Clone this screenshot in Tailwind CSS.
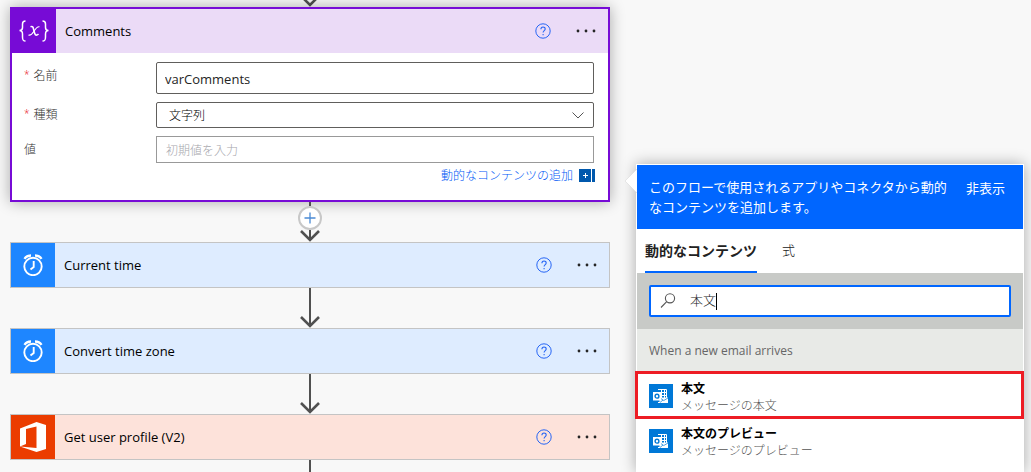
<!DOCTYPE html>
<html lang="ja">
<head>
<meta charset="utf-8">
<meta name="viewport" content="width=device-width, initial-scale=1">
<title>フロー</title>
<script src="https://cdn.jsdelivr.net/npm/@tailwindcss/browser@4"></script>
</head>
<body class="bg-[#f8f8f8] font-['Open_Sans','Noto_Sans_CJK_JP',sans-serif] text-[13px] text-black">
<svg class="hidden">
  <symbol id="arrow" viewBox="0 0 22 14"><path d="M2 3L11 12L20 3" fill="none" stroke="#505050" stroke-width="2.600"/></symbol>
  <symbol id="help" viewBox="0 0 16 16"><circle cx="8" cy="8" r="7.200" fill="none" stroke="#2766f5" stroke-width="1"/><path d="M5.900 6.300C5.900 3.200 10.200 3.300 10.200 6C10.200 7.600 8.100 7.700 8.100 9.600M8.100 11v1.200" fill="none" stroke="#2766f5" stroke-width="1.100"/></symbol>
  <symbol id="more" viewBox="0 0 20 4"><g fill="#252525"><circle cx="2" cy="2" r="1.400"/><circle cx="10" cy="2" r="1.400"/><circle cx="18" cy="2" r="1.400"/></g></symbol>
  <symbol id="clock" viewBox="0 0 20 22"><g fill="none" stroke="#fff"><circle cx="10" cy="12.500" r="8.700" stroke-width="1.900"/><path d="M10.700 7v6L7.500 15.500" stroke-width="1.900"/><path d="M1.500 4.800Q3.500 1.500 8 1.500M18.500 4.800Q16.500 1.500 12 1.500" stroke-width="2.400"/></g></symbol>
  <symbol id="mail" viewBox="0 0 24 24"><path d="M9 5.500h8.500v13H9M11 8.500h6.500M11 11.500h6.500M12.500 5.500v9M15.500 5.500v9" fill="none" stroke="#fff" stroke-width="1"/><path d="M10.500 13.500h8.500v5.500h-8.500z" fill="#fff"/><path d="M11 14l3.800 2.500L19 14M11 18.500l3-2.500" fill="none" stroke="#0078d7" stroke-width=".7"/><path d="M4 8h8v8.500H4z" fill="#fff"/><circle cx="8" cy="12.200" r="1.900" fill="none" stroke="#0078d7" stroke-width="1.400"/></symbol>
</svg>
<div class="grid min-h-screen grid-cols-[600fr_388fr] gap-[26px] overflow-hidden pr-[7px] pl-2.5">
  <main class="flex flex-col">
    <div class="flex h-[7px] flex-col items-center justify-end overflow-hidden"><svg class="h-3.5 w-[22px] shrink-0"><use href="#arrow"/></svg></div>
    <section class="h-[195px] border-2 border-[#770bd6] bg-white shadow-[0_0_14px_rgba(0,0,0,0.32)]">
      <header class="flex h-11 items-center bg-[#ebdbf7]">
        <span class="flex size-11 items-center justify-center bg-[#770bd6]">
          <svg class="h-6 w-8" viewBox="0 0 32 24" fill="none" stroke="#fff"><path d="M7.500 2C5 2 4.500 3 4.500 5v3.500Q4.500 11.500 1.500 11.500Q4.500 11.500 4.500 15v3C4.500 21 5 22 7.500 22M24.500 2C27 2 27.500 3 27.500 5v3.500Q27.500 11.500 30.500 11.500Q27.500 11.500 27.500 15v3C27.500 21 27 22 24.500 22" stroke-width="1.500"/><path d="M12.500 7.800C15 6.800 15.200 8.500 16 12C16.800 15.800 17.800 17.300 20.500 15" stroke-width="1.600"/><path d="M21.500 7.800C19 7 17.800 9.500 16 12.200C14.300 14.800 13 17 10.500 16" stroke-width="1.100"/></svg>
        </span>
        <h2 class="flex-1 pt-px pl-[9px]">Comments</h2>
        <button aria-label="ヘルプ"><svg class="size-4"><use href="#help"/></svg></button>
        <button aria-label="その他" class="mr-3 ml-[25px]"><svg class="h-1 w-5"><use href="#more"/></svg></button>
      </header>
      <div class="flex flex-col gap-2 pt-[9px] pr-3.5 pl-3">
        <div class="flex h-8 items-center"><label for="name" class="flex w-[132px] shrink-0 gap-1 pb-1 text-xs font-light text-[#333]"><span class="text-[10px] text-red-600">*</span>名前</label><input id="name" value="varComments" class="h-full min-w-0 flex-1 rounded-xs border border-[#605e5c] px-2 pt-0.5 text-[#252525]"></div>
        <div class="flex h-[26px] items-center"><label for="type" class="flex w-[132px] shrink-0 gap-1 text-xs font-light text-[#333]"><span class="text-[10px] text-red-600">*</span>種類</label>
          <div class="grid h-full min-w-0 flex-1 items-center">
            <select id="type" class="col-start-1 row-start-1 h-full appearance-none rounded-xs border border-[#605e5c] px-3 pt-0.5 text-xs font-light text-black"><option>文字列</option></select>
            <svg class="pointer-events-none col-start-1 row-start-1 mr-2.5 h-2 w-3 justify-self-end" viewBox="0 0 12 8" fill="none" stroke="#555"><path d="M.5 1.500L6 7L11.500 1.500"/></svg>
          </div></div>
        <div class="flex h-[27px] items-center"><label for="value" class="w-[132px] shrink-0 text-xs font-light text-[#333]">値</label><input id="value" placeholder="初期値を入力" class="h-full min-w-0 flex-1 border border-[#999] px-[9px] pt-0.5 text-xs font-light placeholder:text-[#a6a6ac]"></div>
      </div>
      <a href="#dynamic" class="mt-0.5 mr-[13px] flex items-center justify-end gap-1.5 text-xs leading-[18px] font-light text-[#0058f5]"><span class="pt-0.5">動的なコンテンツの追加</span>
        <svg class="h-[13px] w-4" viewBox="0 0 16 13"><path d="M0 0h12v13H0zM13 0h3v13h-3z" fill="#0058ad"/><path d="M4 6.500h5M6.500 4v5" stroke="#fff"/></svg></a>
    </section>
    <div class="flex h-10 flex-col items-center">
      <span class="h-1 w-0.5 bg-[#505050]"></span>
      <button aria-label="ステップの挿入" class="size-6 shrink-0 rounded-full border-2 border-[#c8c8c8] bg-white p-1"><svg class="size-3" viewBox="0 0 12 12"><path d="M.5 6h11M6 .5v11" stroke="#4b8bd5" stroke-width="1.300"/></svg></button>
      <div class="relative w-[22px] flex-1"><span class="mx-auto block h-2.5 w-0.5 bg-[#505050]"></span><svg class="absolute bottom-0 h-3.5 w-[22px]"><use href="#arrow"/></svg></div>
    </div>
    <section class="flex h-[46px] items-center border border-[#c4c4c4] bg-[#deecff]">
      <span class="flex size-11 items-center justify-center bg-[#1e86ff]"><svg class="h-[22px] w-5"><use href="#clock"/></svg></span>
      <h2 class="flex-1 pt-px pl-[9px]">Current time</h2>
      <button aria-label="ヘルプ"><svg class="size-4"><use href="#help"/></svg></button>
      <button aria-label="その他" class="mr-3 ml-[25px]"><svg class="h-1 w-5"><use href="#more"/></svg></button>
    </section>
    <div class="relative flex h-10 justify-center"><span class="h-[38px] w-0.5 bg-[#505050]"></span><svg class="absolute bottom-0 h-3.5 w-[22px]"><use href="#arrow"/></svg></div>
    <section class="flex h-[46px] items-center border border-[#c4c4c4] bg-[#deecff]">
      <span class="flex size-11 items-center justify-center bg-[#1e86ff]"><svg class="h-[22px] w-5"><use href="#clock"/></svg></span>
      <h2 class="flex-1 pt-px pl-[9px]">Convert time zone</h2>
      <button aria-label="ヘルプ"><svg class="size-4"><use href="#help"/></svg></button>
      <button aria-label="その他" class="mr-3 ml-[25px]"><svg class="h-1 w-5"><use href="#more"/></svg></button>
    </section>
    <div class="relative flex h-10 justify-center"><span class="h-[38px] w-0.5 bg-[#505050]"></span><svg class="absolute bottom-0 h-3.5 w-[22px]"><use href="#arrow"/></svg></div>
    <section class="flex h-[46px] items-center border border-[#c4c4c4] bg-[#fde2da]">
      <span class="flex size-11 items-center justify-center bg-[#eb3c00]"><svg class="h-[30px] w-[26px]" viewBox="0 0 26 30"><path d="M0 6.500L16.500 0L26 3V27L16.500 30L0 24.500L16.500 26V4.500L6 7V22L0 24.500Z" fill="#fff"/></svg></span>
      <h2 class="flex-1 pt-px pl-[9px]">Get user profile (V2)</h2>
      <button aria-label="ヘルプ"><svg class="size-4"><use href="#help"/></svg></button>
      <button aria-label="その他" class="mr-3 ml-[25px]"><svg class="h-1 w-5"><use href="#more"/></svg></button>
    </section>
    <span class="mx-auto w-0.5 flex-1 bg-[#505050]"></span>
  </main>
  <aside id="dynamic" class="relative mt-[164px] flex flex-col border border-b-0 border-white bg-white shadow-[0_0_14px_rgba(0,0,0,0.32)]">
    <svg class="absolute top-1 -left-3 h-6 w-3" viewBox="0 0 12 24"><path d="M12 0L0 12L12 24" fill="#fff" stroke="#ddd" stroke-width=".7"/></svg>
    <div class="flex h-16 justify-between bg-[#0066ff] pt-3 pr-[18px] pl-3 leading-5 text-white">
      <p>このフローで使用されるアプリやコネクタから動的<br>なコンテンツを追加します。</p>
      <button class="h-[22px]">非表示</button>
    </div>
    <div class="flex h-11 gap-[25px] pl-2">
      <button class="border-b-2 border-[#0066ff] pt-0.5 text-sm font-semibold text-[#222]">動的なコンテンツ</button>
      <button class="border-b-2 border-transparent pt-0.5 font-light text-[#222]">式</button>
    </div>
    <div class="bg-[#c8cac7] p-3">
      <label class="flex h-8 items-center gap-3 rounded-xs border-2 border-[#0066ff] bg-white pl-[9px]">
        <svg class="size-4" viewBox="0 0 16 16" fill="none" stroke="#555" stroke-width="1.100"><circle cx="10" cy="5.300" r="4.600"/><path d="M6.700 8.700L1 14.500"/></svg>
        <span class="grid flex-1 items-center">
          <input aria-label="検索" value="本文" class="col-start-1 row-start-1 min-w-0 pl-0.5 font-light text-[#222] outline-none">
          <span class="col-start-1 row-start-1 ml-7 h-[17px] w-px bg-black"></span>
        </span>
      </label>
    </div>
    <h3 class="flex h-[42px] items-center bg-[#e8eae7] pt-0.5 pl-3 text-xs text-[#666]">When a new email arrives</h3>
    <button class="-mr-px -ml-0.5 flex h-12 items-center gap-2 border-3 border-[#ed1c24] pt-0.5 pl-[11px] text-left text-xs">
      <svg class="size-6 bg-[#0078d7]"><use href="#mail"/></svg>
      <span class="pt-0.5 leading-[17px]"><b class="block">本文</b><span class="block font-light text-[#555]">メッセージの本文</span></span>
    </button>
    <button class="flex h-11 items-center gap-2 pl-3 text-left text-xs">
      <svg class="size-6 bg-[#0078d7]"><use href="#mail"/></svg>
      <span class="pt-0.5 leading-[17px]"><b class="block">本文のプレビュー</b><span class="block font-light text-[#555]">メッセージのプレビュー</span></span>
    </button>
  </aside>
</div>
</body>
</html>
